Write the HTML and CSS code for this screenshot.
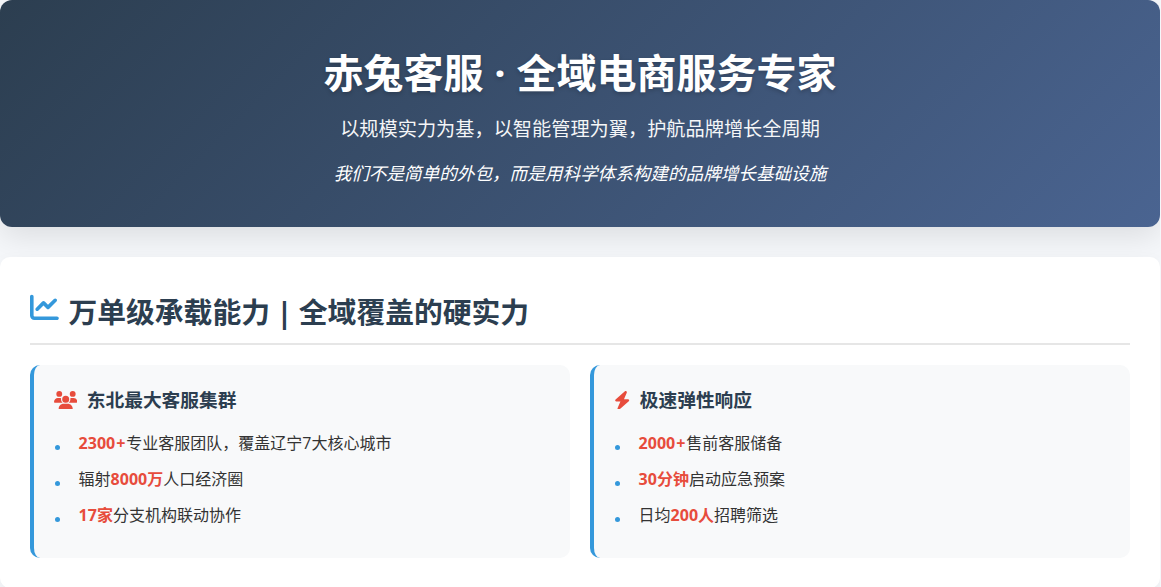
FILE: index.html
```html
<!DOCTYPE html>
<html lang="zh-CN">
<head>
<meta charset="utf-8">
<title>赤兔客服</title>
<link rel="stylesheet" href="styles.css">
</head>
<body>
<header class="hero">
  <h1 class="hero-title">赤兔客服 · 全域电商服务专家</h1>
  <p class="hero-sub">以规模实力为基，以智能管理为翼，护航品牌增长全周期</p>
  <p class="hero-quote">我们不是简单的外包，而是用科学体系构建的品牌增长基础设施</p>
</header>
<section class="panel">
  <h2 class="panel-title">
    <svg class="panel-icon" viewBox="0 0 512 512"><path d="M64 64c0-17.700-14.300-32-32-32S0 46.300 0 64V400c0 44.200 35.800 80 80 80H480c17.700 0 32-14.300 32-32s-14.300-32-32-32H80c-8.800 0-16-7.200-16-16V64zm406.600 86.600c12.500-12.500 12.500-32.800 0-45.300s-32.800-12.500-45.300 0L320 210.700l-57.400-57.400c-12.500-12.500-32.800-12.500-45.300 0l-112 112c-12.500 12.500-12.500 32.800 0 45.300s32.800 12.500 45.300 0L240 221.300l57.400 57.400c12.500 12.500 32.800 12.500 45.300 0l128-128z"/></svg>
    <span class="panel-text">万单级承载能力 | 全域覆盖的硬实力</span>
  </h2>
  <div class="cards">
    <article class="card">
      <h3 class="card-title">
        <svg class="card-icon users" viewBox="0 0 640 512"><path d="M144 0a80 80 0 1 1 0 160A80 80 0 1 1 144 0zM512 0a80 80 0 1 1 0 160A80 80 0 1 1 512 0zM0 298.700C0 239.800 47.800 192 106.700 192h42.700c15.900 0 31 3.500 44.600 9.700c-1.300 7.200-1.900 14.700-1.900 22.300c0 38.200 16.800 72.500 43.300 96c-.2 0-.4 0-.7 0H21.300C9.600 320 0 310.400 0 298.700zM405.300 320c-.2 0-.4 0-.7 0c26.600-23.500 43.300-57.800 43.300-96c0-7.600-.7-15-1.900-22.300c13.600-6.300 28.700-9.700 44.600-9.700h42.700C592.200 192 640 239.800 640 298.700c0 11.800-9.600 21.300-21.300 21.300H405.300zM224 224a96 96 0 1 1 192 0 96 96 0 1 1 -192 0zM128 485.300C128 411.700 187.700 352 261.300 352H378.700C452.300 352 512 411.700 512 485.300c0 14.700-11.900 26.700-26.700 26.700H154.700c-14.700 0-26.700-11.900-26.700-26.700z"/></svg>
        <span>东北最大客服集群</span>
      </h3>
      <ul class="list">
        <li><strong>2300<span class="plus">+</span></strong>专业客服团队，覆盖辽宁7大核心城市</li>
        <li>辐射<strong>8000万</strong>人口经济圈</li>
        <li><strong>17家</strong>分支机构联动协作</li>
      </ul>
    </article>
    <article class="card">
      <h3 class="card-title">
        <svg class="card-icon bolt" viewBox="0 0 448 512"><path d="M349.400 44.600c5.900-13.700 1.500-29.700-10.600-38.500s-28.600-8-39.900 1.800l-256 224c-10 8.800-13.600 22.900-8.900 35.300S50.700 288 64 288H175.500L98.600 467.400c-5.900 13.700-1.500 29.700 10.600 38.500s28.600 8 39.900-1.800l256-224c10-8.800 13.600-22.900 8.900-35.300s-16.600-20.700-30-20.700H272.500L349.400 44.600z"/></svg>
        <span>极速弹性响应</span>
      </h3>
      <ul class="list">
        <li><strong>2000<span class="plus">+</span></strong>售前客服储备</li>
        <li><strong>30分钟</strong>启动应急预案</li>
        <li>日均<strong>200人</strong>招聘筛选</li>
      </ul>
    </article>
  </div>
</section>
</body>
</html>
```
FILE: styles.css
```css
* { box-sizing: border-box; margin: 0; padding: 0; }
html, body { height: 587px; overflow: hidden; }
body {
  width: 1160px;
  background: #f5f7fa;
  font-family: "Open Sans", "Noto Sans CJK SC", sans-serif;
  color: #333;
  line-height: 1.6;
}
.hero {
  padding: 41px 40px 40px;
  margin-bottom: 30px;
  border-radius: 12px;
  background: linear-gradient(135deg, #2c3e50, #4a6491);
  box-shadow: 0 10px 30px rgba(0, 0, 0, 0.1);
  color: #fff;
  text-align: center;
}
.hero-title { font-size: 40px; font-weight: 700; word-spacing: .5px; margin-bottom: 9px; text-shadow: 0 2px 4px rgba(0,0,0,.2); }
.hero-sub { font-size: 19.2px; opacity: .95; margin-bottom: 14px; }
.hero-quote { font-size: 17.6px; font-style: italic; }
.panel {
  background: #fff;
  border-radius: 10px;
  padding: 30px;
  box-shadow: 0 5px 15px rgba(0,0,0,.05);
}
.panel-title {
  display: flex;
  align-items: center;
  gap: 9.6px;
  font-size: 28.8px;
  font-weight: 700;
  color: #2c3e50;
  padding-bottom: 10px;
  margin-bottom: 20px;
  border-bottom: 2px solid #e6e6e6;
}
.panel-text { position: relative; top: 2px; word-spacing: -1px; }
.panel-icon { flex: none; width: 28.8px; height: 28.8px; fill: #3498db; position: relative; top: -2px; }
.cards { display: grid; grid-template-columns: 1fr 1fr; gap: 20px; }
.card {
  background: #f8f9fa;
  border-left: 4px solid #3498db;
  border-radius: 10px;
  padding: 20px;
}
.card-title {
  display: flex;
  align-items: center;
  gap: 9.4px;
  font-size: 18.72px;
  font-weight: 700;
  color: #2c3e50;
  margin-bottom: 16.5px;
}
.card-icon { flex: none; height: 18.72px; fill: #e74c3c; }
.users { width: 23.4px; }
.bolt { width: 16.38px; }
.list { list-style: none; }
.list li {
  position: relative;
  padding-left: 24.6px;
  margin-bottom: 10px;
  font-size: 16px;
}
.list li::before {
  content: "";
  position: absolute;
  left: 1px;
  top: 14px;
  width: 5px;
  height: 5px;
  border-radius: 50%;
  background: #3498db;
}
.list strong { color: #e74c3c; font-weight: 700; }
.plus { padding: 0 1px; }
```
